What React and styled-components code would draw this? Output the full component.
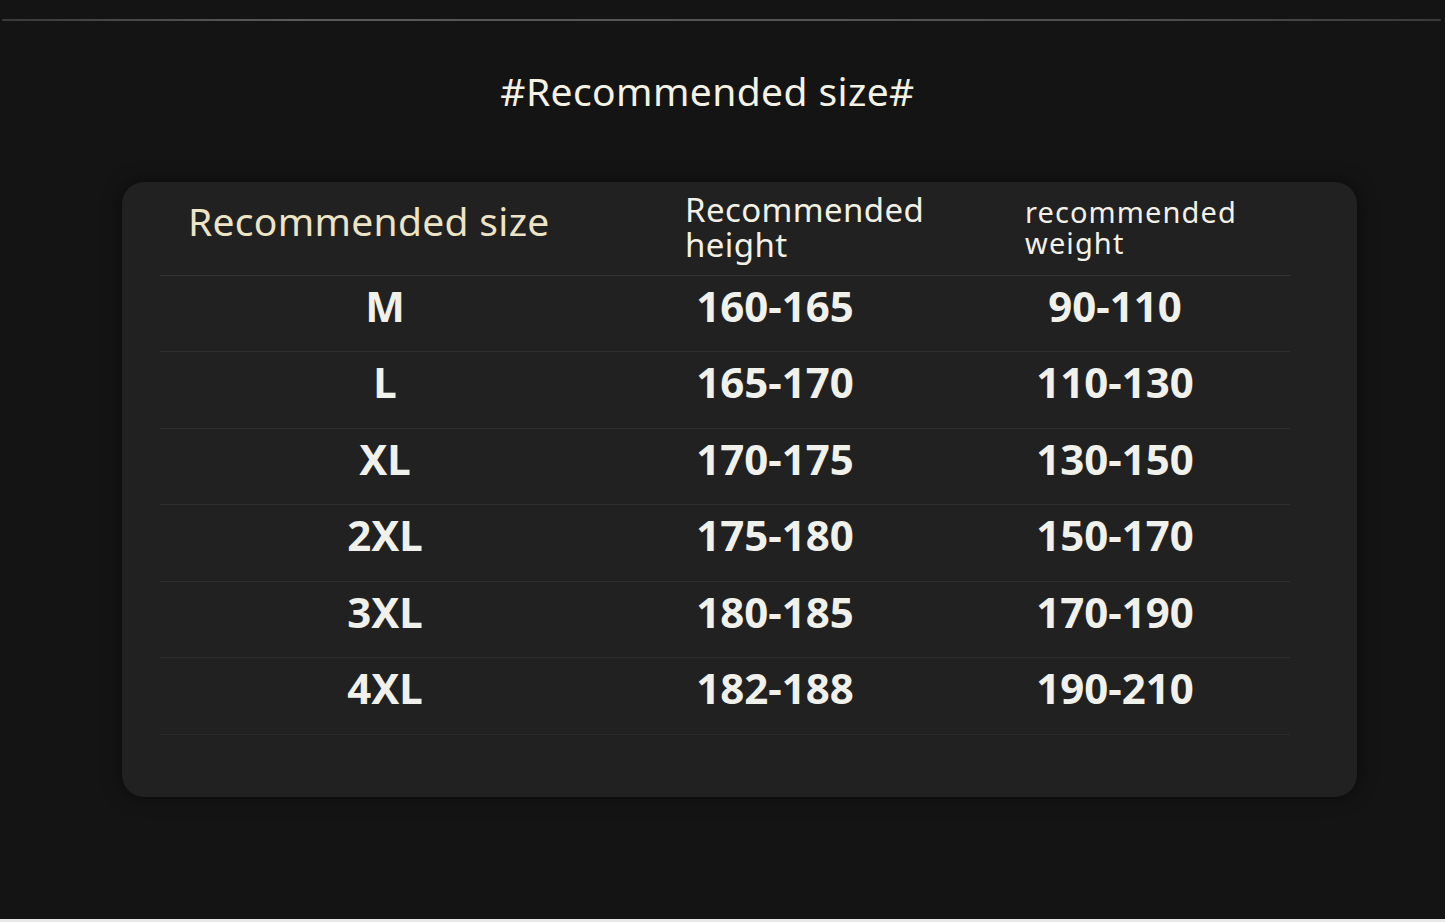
import styled, { createGlobalStyle } from "styled-components";

const GlobalStyle = createGlobalStyle`
body {
    margin:0;
    background:#e6e9e6;
    font-family:"Noto Sans", "Open Sans", sans-serif;
}
`
const Page = styled.div`
width:1445px;
height:919px;
background:#141414;
padding-top:19px;
box-sizing:border-box;
overflow:hidden;
`
const TopLine = styled.div`
height:2px;
margin:0 4px 0 2px;
background:linear-gradient(90deg, #3a3a3a, #5a5a5a 20%, #4e4e4e 80%, #3a3a3a);
border-radius:1px;
`
const Title = styled.h1`
margin:50px 0 0;
text-align:center;
font-size:39px;
line-height:40px;
font-weight:400;
color:#f4f2e4;
letter-spacing:0.4px;
padding-right:30px;
`
const Card = styled.div`
margin:71px 0 0 122px;
width:1235px;
height:615px;
background:#212121;
border-radius:22px;
box-shadow:0 0 18px rgba(0,0,0,0.5);
padding:0 67px 0 38px;
box-sizing:border-box;
`
const Row = styled.div`
display:grid;
grid-template-columns:450px 330px 350px;
height:${props => props.$height}px;
box-sizing:border-box;
border-bottom:1px solid ${props => props.$line};
`
const HeadCell = styled.div`
padding-left:${props => props.$left}px;
padding-top:${props => props.$top}px;
font-size:${props => props.$size}px;
line-height:${props => props.$lh}px;
letter-spacing:${props => props.$ls}px;
color:${props => props.$color};
`
const Cell = styled.div`
text-align:center;
padding-top:9px;
font-size:42px;
line-height:42px;
font-weight:700;
color:#f1f1ec;
`

const sizes = [
    ["M", "160-165", "90-110"],
    ["L", "165-170", "110-130"],
    ["XL", "170-175", "130-150"],
    ["2XL", "175-180", "150-170"],
    ["3XL", "180-185", "170-190"],
    ["4XL", "182-188", "190-210"],
]

const App = () => {
    return (
        <>
            <GlobalStyle />
            <Page>
                <TopLine />
                <Title>#Recommended size#</Title>
                <Card>
                    <Row $height={94} $line="#363636">
                        <HeadCell $left={28} $top={19} $size={39} $lh={40} $ls={0.3} $color="#ede4c6">
                            Recommended size
                        </HeadCell>
                        <HeadCell $left={75} $top={10} $size={33} $lh={35} $ls={0.4} $color="#f3f1e6">
                            Recommended<br />height
                        </HeadCell>
                        <HeadCell $left={85} $top={14} $size={29} $lh={31} $ls={1.1} $color="#f3f1e6">
                            recommended<br />weight
                        </HeadCell>
                    </Row>
                    {sizes.map((item, idx) => (
                        <Row key={idx} $height={idx == 0 ? 76 : 76.6} $line={idx == sizes.length - 1 ? "#2b2b2b" : "#2e2e2e"}>
                            {item.map((value, i) => (
                                <Cell key={i}>{value}</Cell>
                            ))}
                        </Row>
                    ))}
                </Card>
            </Page>
        </>
    )
}
export default App;
